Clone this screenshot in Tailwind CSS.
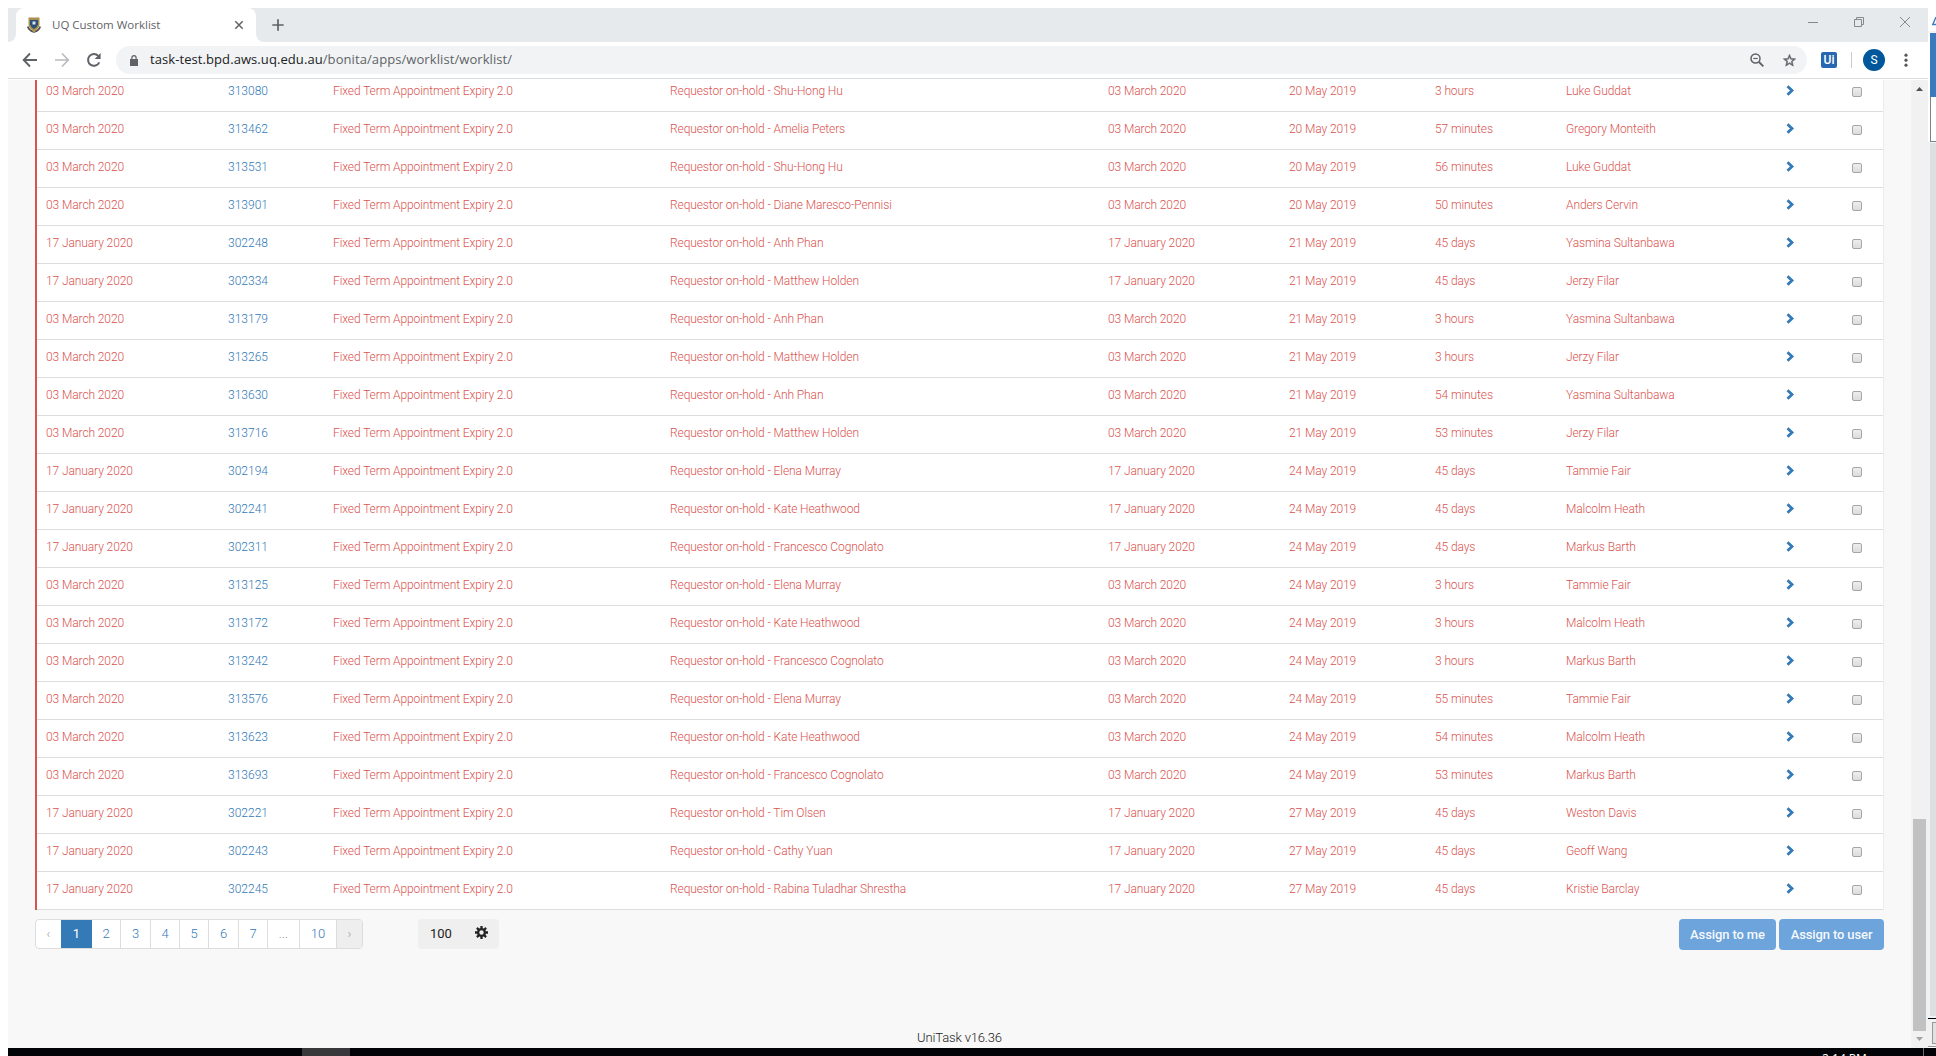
<!DOCTYPE html>
<html lang="en">
<head>
<meta charset="utf-8">
<title>UQ Custom Worklist</title>
<script src="https://cdn.jsdelivr.net/npm/@tailwindcss/browser@4"></script>
</head>
<body class="w-[1936px] h-[1056px] overflow-hidden bg-white pt-2 pl-2 flex flex-col font-[Roboto,sans-serif]">
<div class="flex h-[1040px] shrink-0">
  <!-- browser window -->
  <div class="w-[1920px] shrink-0 flex flex-col">
    <!-- tab strip -->
    <div class="h-[34px] bg-[#e6eaed] flex shrink-0">
      <div class="w-2 bg-white"><div class="h-full bg-[#e6eaed] rounded-br-lg"></div></div>
      <div class="w-[240px] bg-white rounded-t-lg flex items-center">
        <svg class="ml-[11px] w-[14px] h-4 shrink-0" viewBox="0 0 14 16"><path d="M1.500 0.500h11v7q-.5 4-5.500 6.500q-5-2.500-5.500-6.500z" fill="#a98f4d"/><path d="M3 3h8v4.500q-1 3-4 4.500q-3-1.500-4-4.500z" fill="#2d4f77"/><path d="M5.500 4.500h3v3h-3z" fill="#dbe6ee"/><path d="M.8 9.500q1 4 6.200 5.500q5-1.500 6.200-5.500" fill="none" stroke="#57534c" stroke-width="1.800"/><path d="M5 13.500h4l-2 2z" fill="#b89b4f"/></svg>
        <span class="ml-[11px] w-[182px] shrink-0 text-[11.5px] font-['Open_Sans',sans-serif] text-[#5f6368] whitespace-nowrap">UQ Custom Worklist</span>
        <svg class="w-[10px] h-[10px]" viewBox="0 0 10 10"><path d="M1.300 1.300l7.400 7.400M8.700 1.300l-7.400 7.400" stroke="#5f6368" stroke-width="1.500"/></svg>
      </div>
      <div class="w-2 bg-white"><div class="h-full bg-[#e6eaed] rounded-bl-lg"></div></div>
      <svg class="ml-2 mt-[11px] w-3 h-3" viewBox="0 0 12 12"><path d="M6 .3v11.400M.3 6h11.400" stroke="#5f6368" stroke-width="1.700"/></svg>
      <div class="ml-auto mr-[17px] mt-[8px] flex items-start gap-[34px]">
        <svg class="w-[12px] h-[12px]" viewBox="0 0 12 12"><path d="M1 6.500h10" stroke="#85888c"/></svg>
        <svg class="w-[12px] h-[12px]" viewBox="0 0 12 12"><path d="M1.500 3.500h7v7h-7zM3.500 3v-1.500h7v7h-1.500" fill="none" stroke="#85888c"/></svg>
        <svg class="w-[12px] h-[12px]" viewBox="0 0 12 12"><path d="M1 1l10 10M11 1L1 11" stroke="#85888c"/></svg>
      </div>
    </div>
    <!-- toolbar -->
    <div class="h-[37px] shrink-0 bg-white border-b border-[#dadce0] flex items-center text-[#5f6368]">
      <svg class="ml-[14px] w-4 h-4" viewBox="0 0 16 16" fill="none" stroke="#5f6368" stroke-width="1.900"><path d="M15 8H2M8 1.500L1.700 8L8 14.500"/></svg>
      <svg class="ml-4 w-4 h-4" viewBox="0 0 16 16" fill="none" stroke="#b9bbbe" stroke-width="1.700"><path d="M1 8h13M8 1.500L14.300 8L8 14.500"/></svg>
      <svg class="ml-4 w-4 h-4" viewBox="0 0 16 16"><path d="M13.300 10.400A5.900 5.900 0 1 1 12.300 3.900" fill="none" stroke="#5f6368" stroke-width="2"/><path d="M14.600 1v6H8.600z" fill="#5f6368"/></svg>
      <div class="ml-[14px] w-[1691px] h-7 rounded-full bg-[#f1f3f4] flex items-center">
        <svg class="ml-[14px] w-2 h-[11px] shrink-0" viewBox="0 0 8 11"><path d="M0 4h8v7H0z" fill="#5f6368"/><path d="M1.900 4V2.700a2.100 2.100 0 0 1 4.200 0V4" fill="none" stroke="#5f6368" stroke-width="1.200"/></svg>
        <span class="ml-[12px] font-['Open_Sans',sans-serif] text-[13px] tracking-[0.08px] whitespace-nowrap"><span class="text-[#202124]">task-test.bpd.aws.uq.edu.au</span><span class="text-[#5f6368]">/bonita/apps/worklist/worklist/</span></span>
        <svg class="ml-auto w-[14px] h-[14px]" viewBox="0 0 14 14" fill="none" stroke="#5f6368" stroke-width="1.500"><circle cx="5.500" cy="5.500" r="4.500"/><path d="M9 9l4.300 4.300" stroke-width="1.900"/><path d="M3.300 5.500h4.400" stroke-width="1.200"/></svg>
        <svg class="ml-[18px] mr-[10px] w-[15px] h-[15px]" viewBox="0 0 24 24"><path fill="#5f6368" d="M22 9.240l-7.190-.62L12 2 9.190 8.630 2 9.240l5.460 4.730L5.820 21 12 17.270 18.180 21l-1.630-7.030L22 9.240zM12 15.400l-3.760 2.270 1-4.280-3.320-2.880 4.380-.38L12 6.100l1.710 4.040 4.380.38-3.320 2.880 1 4.280L12 15.400z" stroke="#5f6368" stroke-width=".8"/></svg>
      </div>
      <div class="ml-[14px] w-4 h-4 rounded-[2px] bg-[#2767b1] text-white text-[12px] leading-4 font-medium text-center">Ui</div>
      <div class="ml-[14px] w-px h-4 bg-[#c9ccd0]"></div>
      <div class="ml-[11px] w-[22px] h-[22px] rounded-full bg-[#01579b] text-white text-[12px] leading-[22px] text-center">S</div>
      <svg class="ml-[19px] w-1 h-[14px]" viewBox="0 0 4 14" fill="#55585d"><circle cx="2" cy="2.200" r="1.600"/><circle cx="2" cy="7.200" r="1.600"/><circle cx="2" cy="12.200" r="1.600"/></svg>
    </div>
    <!-- page -->
    <div class="h-[969px] shrink-0 bg-[#f8f8f8] border-t border-white flex overflow-hidden">
      <main class="w-[1903px] shrink-0 pl-[27px] pr-[27px] flex flex-col">
        <div id="rows" class="-mt-[6px] border-l-2 border-l-[#d9534f] border-r border-r-[#ececec] bg-white text-[12px] font-light tracking-[-0.1px] text-[#d9534f]"></div>
        <div class="mt-[9px] flex items-start">
          <div class="flex h-[30px] rounded-[4px] border border-[#ddd] bg-white text-[13px] leading-[28px] font-light text-[#337ab7] text-center overflow-hidden">
            <span class="w-[25px] text-[#999]">‹</span>
            <span class="w-[31px] bg-[#337ab7] text-white font-normal">1</span>
            <span class="w-[29px] border-r border-[#ddd]">2</span>
            <span class="w-[30px] border-r border-[#ddd]">3</span>
            <span class="w-[29px] border-r border-[#ddd]">4</span>
            <span class="w-[29px] border-r border-[#ddd]">5</span>
            <span class="w-[30px] border-r border-[#ddd]">6</span>
            <span class="w-[29px] border-r border-[#ddd]">7</span>
            <span class="w-[32px] border-r border-[#ddd] text-[#888]">...</span>
            <span class="w-[37px] border-r border-[#ddd]">10</span>
            <span class="w-[25px] bg-[#eee] text-[#999]">›</span>
          </div>
          <div class="ml-[55px] w-[81px] h-[30px] rounded-[4px] bg-[#efefef] flex items-center text-[13px] text-[#222]">
            <span class="ml-3 w-[45px]">100</span>
            <svg class="-mt-[3px] w-[13px] h-[13px]" viewBox="0 0 13 13"><circle cx="6.500" cy="6.500" r="3.400" fill="none" stroke="#222" stroke-width="2.300"/><g stroke="#222" stroke-width="2.300"><path d="M6.500 0v2.500M6.500 10.500V13M0 6.500h2.500M10.500 6.500H13M1.900 1.900l1.800 1.800M9.300 9.300l1.800 1.800M1.900 11.100l1.800-1.800M9.300 3.700l1.800-1.800"/></g></svg>
          </div>
          <div class="ml-auto flex gap-[3px] text-[13px] leading-[31px] font-medium tracking-[-0.12px] text-white/95 text-center">
            <div class="w-[97px] h-[31px] rounded-[4px] bg-[#6ea4dc]">Assign to me</div>
            <div class="w-[105px] h-[31px] rounded-[4px] bg-[#6ea4dc]">Assign to user</div>
          </div>
        </div>
        <div class="mt-[78px] text-center text-[13px] leading-5 font-light tracking-[-0.15px] text-[#222]">UniTask v16.36</div>
      </main>
      <!-- scrollbar -->
      <div class="w-[17px] bg-[#f1f1f1] flex flex-col items-center">
        <svg class="mt-[7px] w-[7px] h-1 shrink-0" viewBox="0 0 7 4"><path d="M0 4h7L3.500 0z" fill="#505050"/></svg>
        <div class="mt-[728px] w-[13px] h-[212px] shrink-0 bg-[#c1c1c1]"></div>
        <svg class="mt-[6px] w-[7px] h-1 shrink-0" viewBox="0 0 7 4"><path d="M0 0h7L3.500 4z" fill="#a3a3a3"/></svg>
      </div>
    </div>
  </div>
  <!-- sliver of the window behind -->
  <div class="w-2 shrink-0 overflow-hidden flex flex-col">
    <svg class="mt-[8px] ml-1 w-1 h-[10px] shrink-0" viewBox="0 0 4 10"><path d="M4 1L.8 8.500H4" fill="none" stroke="#3b7cc4" stroke-width="1.400"/></svg>
    <div class="mt-[5px] h-[2px] shrink-0 bg-[#f4f4f4]"></div>
    <div class="ml-[2px] h-[64px] shrink-0 bg-[#3a7abf]"></div>
    <div class="ml-[2px] h-[45px] shrink-0 bg-white border-l border-b border-[#7d8288]"></div>
    <div class="bg-[#eef3f7] pl-[2px] pt-px h-[876px] shrink-0"><div class="h-[873px] bg-[#dde0df]"></div></div>
    <div class="h-px shrink-0 bg-black"></div>
    <div class="h-[28px] shrink-0 bg-[#f1f1f1] pl-1 pt-[3px] border-b border-[#999]"><div class="w-2 h-[22px] border border-[#999] bg-[#e1e1e1]"></div></div>
  </div>
</div>
<!-- taskbar -->
<div class="h-2 shrink-0 bg-[#020307] flex overflow-hidden">
  <div class="ml-[294px] w-[48px] bg-[#38383b]"></div>
  <div class="ml-[1472px] mt-[3px] w-[101px] text-white text-[12px] leading-4 font-['Open_Sans',sans-serif]">2:14 PM</div>
  <div class="w-px bg-[#6b6b6b]"></div>
</div>
<script>
const M='03 March 2020', J='17 January 2020', H='3 hours', D='45 days';
const data=[
[M,313080,'Shu-Hong Hu',20,H,'Luke Guddat'],
[M,313462,'Amelia Peters',20,'57 minutes','Gregory Monteith'],
[M,313531,'Shu-Hong Hu',20,'56 minutes','Luke Guddat'],
[M,313901,'Diane Maresco-Pennisi',20,'50 minutes','Anders Cervin'],
[J,302248,'Anh Phan',21,D,'Yasmina Sultanbawa'],
[J,302334,'Matthew Holden',21,D,'Jerzy Filar'],
[M,313179,'Anh Phan',21,H,'Yasmina Sultanbawa'],
[M,313265,'Matthew Holden',21,H,'Jerzy Filar'],
[M,313630,'Anh Phan',21,'54 minutes','Yasmina Sultanbawa'],
[M,313716,'Matthew Holden',21,'53 minutes','Jerzy Filar'],
[J,302194,'Elena Murray',24,D,'Tammie Fair'],
[J,302241,'Kate Heathwood',24,D,'Malcolm Heath'],
[J,302311,'Francesco Cognolato',24,D,'Markus Barth'],
[M,313125,'Elena Murray',24,H,'Tammie Fair'],
[M,313172,'Kate Heathwood',24,H,'Malcolm Heath'],
[M,313242,'Francesco Cognolato',24,H,'Markus Barth'],
[M,313576,'Elena Murray',24,'55 minutes','Tammie Fair'],
[M,313623,'Kate Heathwood',24,'54 minutes','Malcolm Heath'],
[M,313693,'Francesco Cognolato',24,'53 minutes','Markus Barth'],
[J,302221,'Tim Olsen',27,D,'Weston Davis'],
[J,302243,'Cathy Yuan',27,D,'Geoff Wang'],
[J,302245,'Rabina Tuladhar Shrestha',27,D,'Kristie Barclay']];
document.getElementById('rows').innerHTML=data.map(([d,id,who,day,age,name])=>`
<div class="h-[38px] border-b border-[#ddd] pl-[9px] pb-[3px] grid grid-cols-[182px_105px_337px_438px_181px_146px_131px_220px_66px_1fr] items-center whitespace-nowrap">
<span>${d}</span><span class="text-[#337ab7] tracking-normal">${id}</span><span>Fixed Term Appointment Expiry 2.0</span><span>Requestor on-hold - ${who}</span><span>${d}</span><span>${day} May 2019</span><span>${age}</span><span>${name}</span>
<svg class="w-[9px] h-[11px] -mt-px" viewBox="0 0 9 11"><path d="M1.500 1.300L6 5.500L1.500 9.700" fill="none" stroke="#337ab7" stroke-width="2.800"/></svg>
<span class="mt-[2px] w-[10px] h-[10px] rounded-[2px] border border-[#a6a6a6] bg-linear-to-b from-[#eee] to-[#dcdcdc]"></span>
</div>`).join('');
</script>
</body>
</html>
